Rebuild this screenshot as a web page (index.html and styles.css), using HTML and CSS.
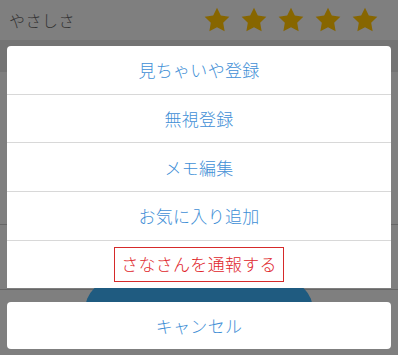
FILE: index.html
```html
<!DOCTYPE html>
<html lang="ja">
<head>
<meta charset="utf-8">
<link rel="stylesheet" href="styles.css">
</head>
<body>
<div class="page">
  <div class="header">
    <span class="label">やさしさ</span>
    <div class="stars">
      <svg class="star" viewBox="0 0 24 24"><path d="M12 0.6l3.5 7.2 7.9 1.1-5.7 5.6 1.35 7.9L12 18.7l-7.05 3.7 1.35-7.9L0.6 8.9l7.9-1.1z"/></svg>
      <svg class="star" viewBox="0 0 24 24"><path d="M12 0.6l3.5 7.2 7.9 1.1-5.7 5.6 1.35 7.9L12 18.7l-7.05 3.7 1.35-7.9L0.6 8.9l7.9-1.1z"/></svg>
      <svg class="star" viewBox="0 0 24 24"><path d="M12 0.6l3.5 7.2 7.9 1.1-5.7 5.6 1.35 7.9L12 18.7l-7.05 3.7 1.35-7.9L0.6 8.9l7.9-1.1z"/></svg>
      <svg class="star" viewBox="0 0 24 24"><path d="M12 0.6l3.5 7.2 7.9 1.1-5.7 5.6 1.35 7.9L12 18.7l-7.05 3.7 1.35-7.9L0.6 8.9l7.9-1.1z"/></svg>
      <svg class="star" viewBox="0 0 24 24"><path d="M12 0.6l3.5 7.2 7.9 1.1-5.7 5.6 1.35 7.9L12 18.7l-7.05 3.7 1.35-7.9L0.6 8.9l7.9-1.1z"/></svg>
    </div>
  </div>
  <div class="band"></div>
  <div class="rows">
    <div class="bgrow"></div>
    <div class="bgrow"></div>
  </div>
  <div class="btnwrap"><div class="pill"></div></div>
</div>

<div class="sheet-wrap">
  <div class="sheet">
    <div class="item">見ちゃいや登録</div>
    <div class="item">無視登録</div>
    <div class="item">メモ編集</div>
    <div class="item">お気に入り追加</div>
    <div class="item"><span class="report">さなさんを通報する</span></div>
  </div>
  <div class="sheet cancel">
    <div class="item">キャンセル</div>
  </div>
</div>
</body>
</html>
```
FILE: styles.css
```css
html, body {
  margin: 0;
  padding: 0;
}
body {
  width: 398px;
  height: 355px;
  overflow: hidden;
  background: #7f7f7f;
  font-family: "Noto Sans CJK JP", "Noto Sans", sans-serif;
  position: relative;
}
.page {
  display: flex;
  flex-direction: column;
}
.header {
  height: 40px;
  display: flex;
  align-items: center;
  justify-content: space-between;
  padding: 0 20px 0 9px;
  background: #7f7f7f;
}
.label {
  font-size: 16px;
  font-weight: 300;
  color: #333;
  letter-spacing: 0.5px;
  margin-top: -1px;
}
.stars {
  display: flex;
  gap: 11px;
}
.star {
  width: 26px;
  height: 26px;
  fill: #876600;
}
.band {
  height: 32px;
  background: #747474;
}
.rows {
  display: flex;
  flex-direction: column;
}
.bgrow {
  height: 152px;
  border-bottom: 1px solid #666;
}
.bgrow + .bgrow {
  height: 64px;
}
.btnwrap {
  display: flex;
  padding-left: 85px;
  margin-top: -10px;
}
.pill {
  width: 228px;
  height: 60px;
  border-radius: 30px;
  background: #1f5b80;
}
.sheet-wrap {
  position: absolute;
  left: 7px;
  right: 7px;
  top: 46px;
  display: flex;
  flex-direction: column;
  gap: 14px;
}
.sheet {
  background: #fff;
  border-radius: 4px 4px 0 0;
  display: flex;
  flex-direction: column;
}
.sheet.cancel {
  border-radius: 4px;
}
.item {
  height: 47.7px;
  display: flex;
  align-items: center;
  justify-content: center;
  font-size: 17px;
  font-weight: 300;
  color: #3f8fd6;
  letter-spacing: 0.3px;
}
.item + .item {
  border-top: 1px solid #d8d8d8;
}
.cancel .item {
  height: 47px;
}
.report {
  color: #e0262b;
  border: 1px solid #d52a2a;
  padding: 3px 6px 4px;
  line-height: 1.5;
}
```
